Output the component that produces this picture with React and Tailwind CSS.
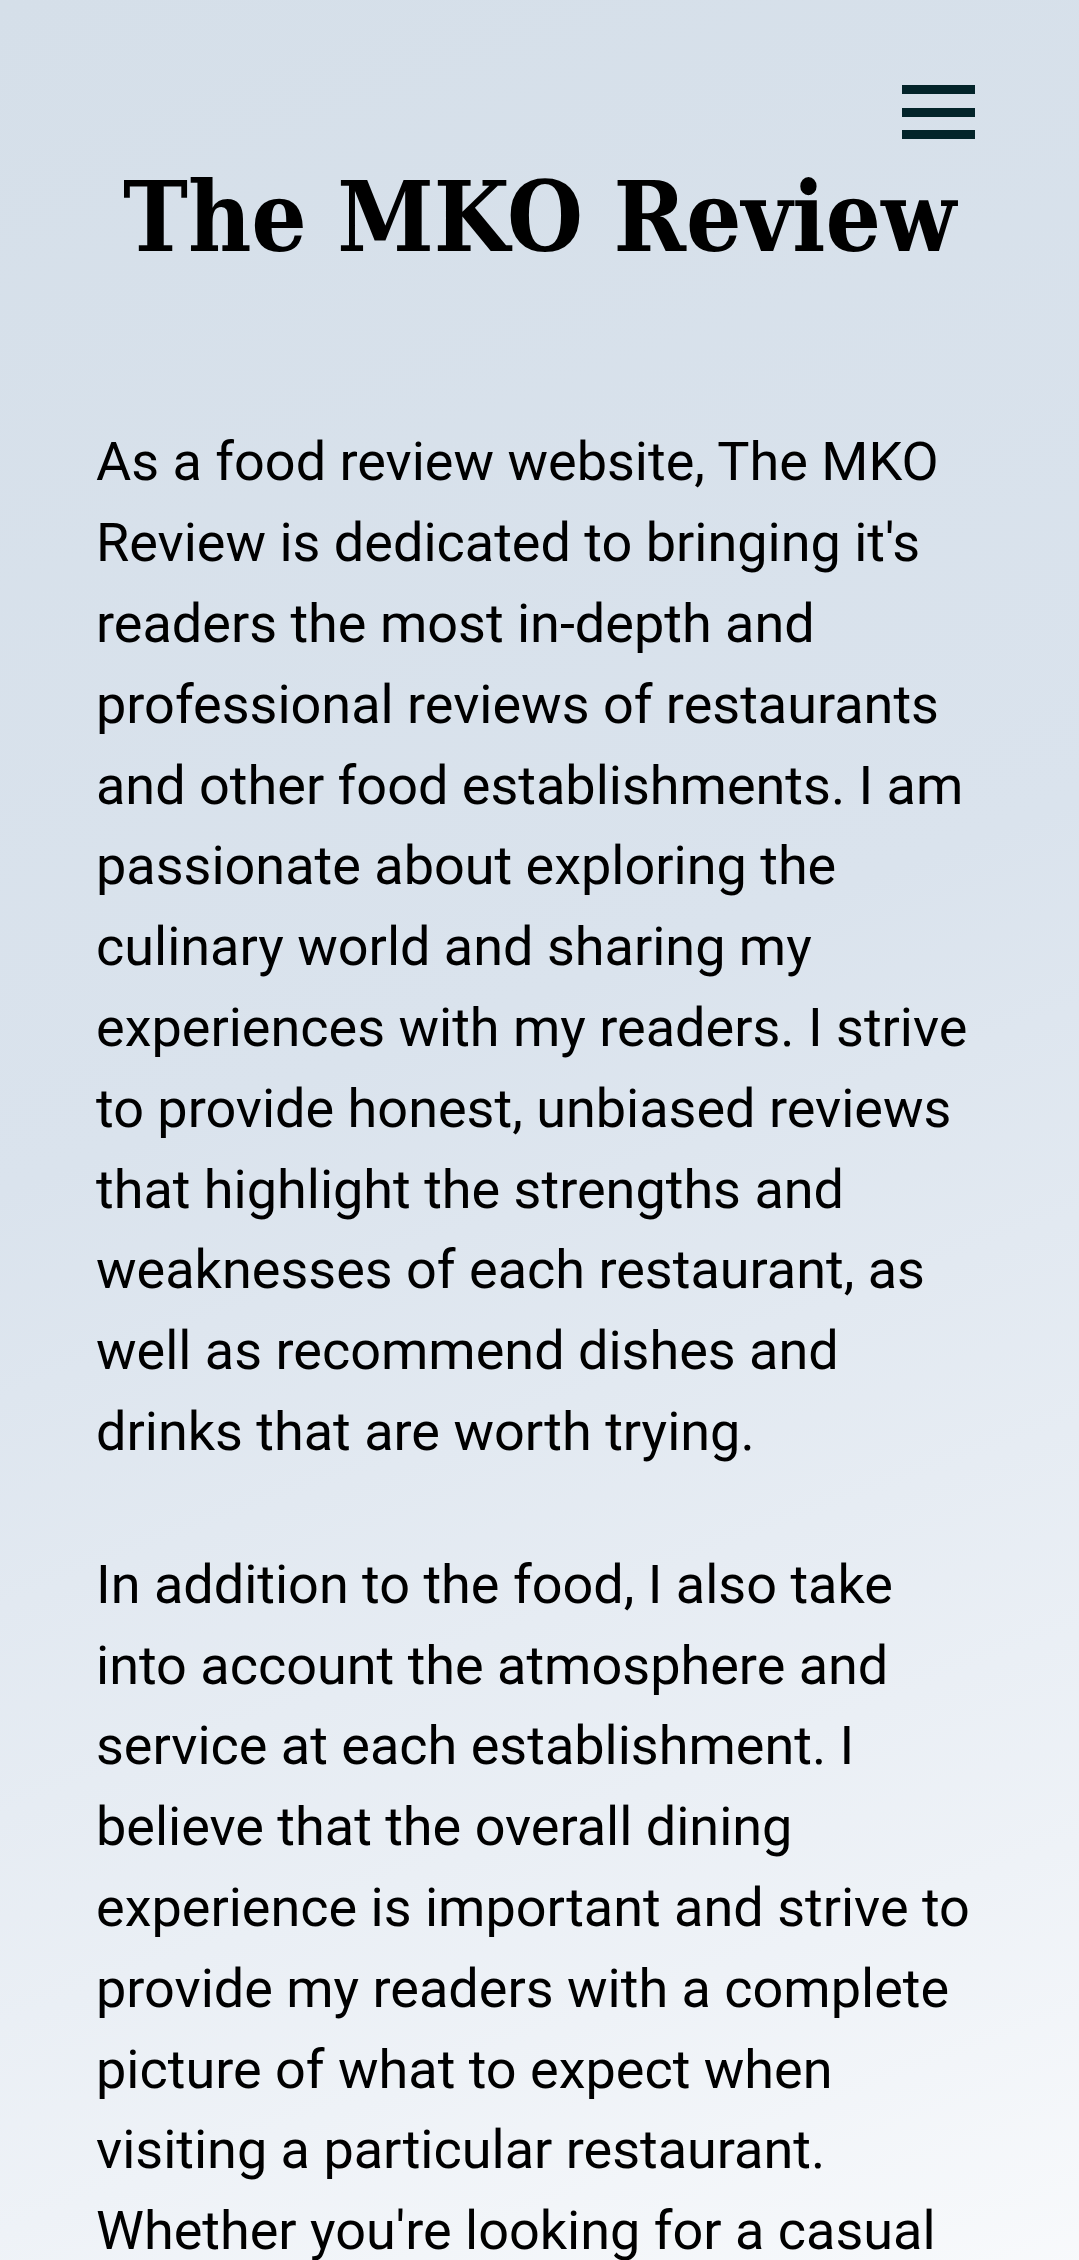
import React from 'react';

const paragraphs = [
  "As a food review website, The MKO Review is dedicated to bringing it's readers the most in-depth and professional reviews of restaurants and other food establishments. I am passionate about exploring the culinary world and sharing my experiences with my readers. I strive to provide honest, unbiased reviews that highlight the strengths and weaknesses of each restaurant, as well as recommend dishes and drinks that are worth trying.",
  "In addition to the food, I also take into account the atmosphere and service at each establishment. I believe that the overall dining experience is important and strive to provide my readers with a complete picture of what to expect when visiting a particular restaurant. Whether you're looking for a casual bite to eat or a fancy night out, The MKO Review has you covered with honest and detailed reviews.",
];

function App() {
  return (
    <div className="min-h-[2260px] w-full overflow-hidden bg-[linear-gradient(160deg,#d5dfe9_0%,#dae3ed_40%,#eef2f7_75%,#ffffff_100%)]">
      {/* Header */}
      <header className="pt-[85px]">
        <div className="flex justify-end pr-[104px]">
          <button aria-label="Menu" className="flex flex-col gap-[13.7px] w-[73px]">
            <span className="block h-[9px] w-full bg-[#03242a]"></span>
            <span className="block h-[9px] w-full bg-[#03242a]"></span>
            <span className="block h-[9px] w-full bg-[#03242a]"></span>
          </button>
        </div>
        <h1 className="mt-[30px] text-center text-[97px] leading-[97px] font-bold text-black font-['DejaVu_Serif_Condensed','DejaVu_Serif',serif] [font-stretch:condensed]">
          The MKO Review
        </h1>
      </header>

      {/* About */}
      <main className="px-[96px] pt-[156px]">
        {paragraphs.map((text, i) => (
          <p
            key={i}
            className="mb-[72px] text-[54px] leading-[80.8px] text-black font-['Roboto',sans-serif]"
          >
            {text}
          </p>
        ))}
      </main>
    </div>
  );
}

export default App;
